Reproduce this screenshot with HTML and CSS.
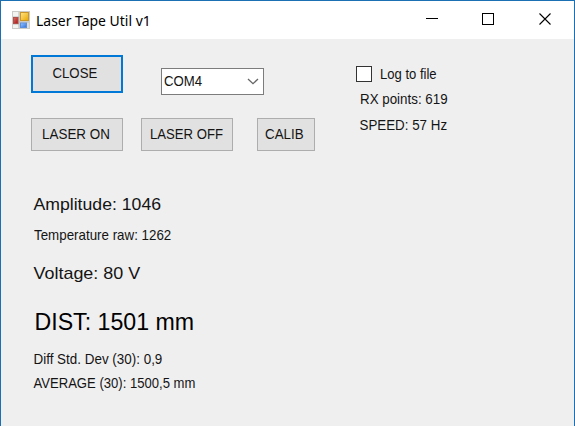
FILE: index.html
```html
<!DOCTYPE html>
<html lang="en">
<head>
<meta charset="utf-8">
<title>Laser Tape Util v1</title>
<link rel="stylesheet" href="styles.css">
</head>
<body>
<div class="window">
  <header class="titlebar">
    <svg class="app-icon" width="18" height="18" viewBox="0 0 18 18">
      <defs>
        <linearGradient id="gold" x2="1" y2="1"><stop offset="0" stop-color="#ffe58a"/><stop offset="1" stop-color="#e9a800"/></linearGradient>
        <linearGradient id="red" x2="1" y2="1"><stop offset="0" stop-color="#dc7068"/><stop offset="1" stop-color="#a81212"/></linearGradient>
        <linearGradient id="blue" x2="1" y2="1"><stop offset="0" stop-color="#9cc8ff"/><stop offset="1" stop-color="#2f6fdc"/></linearGradient>
      </defs>
      <rect x=".5" y=".5" width="17" height="17" fill="#dcdcda" stroke="#cbcbc8"/>
      <path d="M1 1h6v5H1zM1 13h6v4H1z" fill="#f3f3f1"/>
      <path d="M7 1v16M1 6h6M1 13h6M7 11h10" stroke="#b9b9b6" fill="none"/>
      <rect x="8.500" y="1.5" width="8" height="8" fill="url(#gold)" stroke="#c9962a"/>
      <rect x="1.5" y="6.5" width="4.500" height="6" fill="url(#red)" stroke="#b0504a"/>
      <rect x="8.5" y="12" width="6" height="4.500" fill="url(#blue)" stroke="#5a8fe0"/>
    </svg>
    <h1 class="title"><span class="t t-title">Laser Tape Util v1</span></h1>
    <svg class="controls" width="128" height="14" viewBox="0 0 128 14">
      <path d="M0 6.5h12M56.5 1.5h11v11h-11z" fill="none" stroke="#000" shape-rendering="crispEdges"/>
      <path d="M113.5 1.500l11 11M124.5 1.500l-11 11" fill="none" stroke="#000" stroke-width="1.1"/>
    </svg>
  </header>
  <main class="form">
    <section class="left">
      <div class="row row-port">
        <button class="btn focused"><span class="t t-close">CLOSE</span></button>
        <div class="combo"><span class="t t-com">COM4</span>
          <svg width="12" height="7" viewBox="0 0 12 7"><path d="M1 1l5 4.700L11 1" fill="none" stroke="#666" stroke-width="1.300"/></svg>
        </div>
      </div>
      <div class="row row-actions">
        <button class="btn"><span class="t t-on">LASER ON</span></button>
        <button class="btn off"><span class="t t-off">LASER OFF</span></button>
        <button class="btn calib"><span class="t t-calib">CALIB</span></button>
      </div>
      <div class="readings">
        <p class="amp"><span class="t t-amp">Amplitude: 1046</span></p>
        <p class="temp"><span class="t t-temp">Temperature raw: 1262</span></p>
        <p class="volt"><span class="t t-volt">Voltage: 80 V</span></p>
        <p class="dist"><span class="t t-dist">DIST: 1501 mm</span></p>
        <p class="diff"><span class="t t-diff">Diff Std. Dev (30): 0,9</span></p>
        <p class="avg"><span class="t t-avg">AVERAGE (30): 1500,5 mm</span></p>
      </div>
    </section>
    <section class="right">
      <label class="log"><i class="box"></i><span class="t t-log">Log to file</span></label>
      <p class="rx"><span class="t t-rx">RX points: 619</span></p>
      <p class="speed"><span class="t t-speed">SPEED: 57 Hz</span></p>
    </section>
  </main>
</div>
</body>
</html>
```
FILE: styles.css
```css
* { box-sizing: border-box; }
body { margin: 0; overflow: hidden; }
p, h1 { margin: 0; }
.window {
  width: 575px; height: 426px;
  display: flex; flex-direction: column;
  border: 1px solid #1b6fb3; border-bottom: 0;
  background: #efefef;
  font: 15px/20px "Liberation Sans", Arial, sans-serif;
  color: #141414;
}
.t { display: inline-block; white-space: pre; transform-origin: 0 50%; }
.titlebar { height: 38px; display: flex; align-items: center; background: #fff; padding-left: 11px; }
.app-icon { display: block; margin-top: -1px; }
.title { flex: 1; margin: 0 0 0 6px; font: 15px/20px "Noto Sans", sans-serif; color: #000; }
.controls { margin: -2px 20px 0 0; }
.form { flex: 1; display: flex; }
.left { width: 355px; padding: 16px 0 0 30px; }
.row { display: flex; }
.row-port { height: 63px; align-items: flex-start; }
.btn {
  width: 92px; height: 33px; padding: 0 0 2px 10px;
  border: 1px solid #adadad; background: #e1e1e1;
  font: inherit; color: inherit; text-align: left;
}
.focused { height: 38px; padding-left: 19px; border: 2px solid #0078d7; }
.off { margin-left: 18px; padding-left: 8px; }
.calib { width: 58px; margin-left: 24px; padding-left: 7px; }
.combo {
  width: 103px; height: 27px; margin: 13px 0 0 38px; padding: 0 4px 0 2px;
  display: flex; align-items: center; justify-content: space-between;
  border: 1px solid #7c7c7c; background: #fff;
}
.readings { padding: 44px 0 0 2px; }
.amp, .volt { font-size: 17px; }
.temp { margin-top: 10px; padding-left: 1px; }
.volt { margin-top: 19px; }
.dist { margin: 23px 0 0; font-size: 24px; line-height: 30px; color: #000; }
.diff { margin-top: 12px; }
.avg { margin-top: 4px; }
.right { padding-top: 26px; }
.log { display: flex; align-items: center; height: 18px; }
.box { width: 16px; height: 16px; border: 1px solid #333; background: #fff; margin-right: 8px; }
.rx, .speed { padding-left: 3px; }
.rx { margin-top: 6px; }
.speed { margin-top: 6px; }
.t-title { transform: scaleX(.93); }
.t-close { transform: translateX(.500px) scaleX(.88); }
.t-com { transform: translateY(-1px) scaleX(.88); }
.t-on { transform: scaleX(.895); }
.t-off { transform: scaleX(.875); }
.t-calib { transform: scaleX(.89); }
.t-log { transform: scaleX(.87); }
.t-rx { transform: translateX(1px) scaleX(.89); }
.t-speed { transform: translateX(.500px) scaleX(.89); }
.t-amp { transform: translateX(.500px) scaleX(1.038); }
.t-temp { transform: scaleX(.89); }
.t-volt { transform: translateX(.500px) scaleX(1.055); }
.t-dist { transform: translateX(1.500px) scaleX(.965); }
.t-diff { transform: translateX(.500px) scaleX(.895); }
.t-avg { transform: translateX(.500px) scaleX(.872); }
```
